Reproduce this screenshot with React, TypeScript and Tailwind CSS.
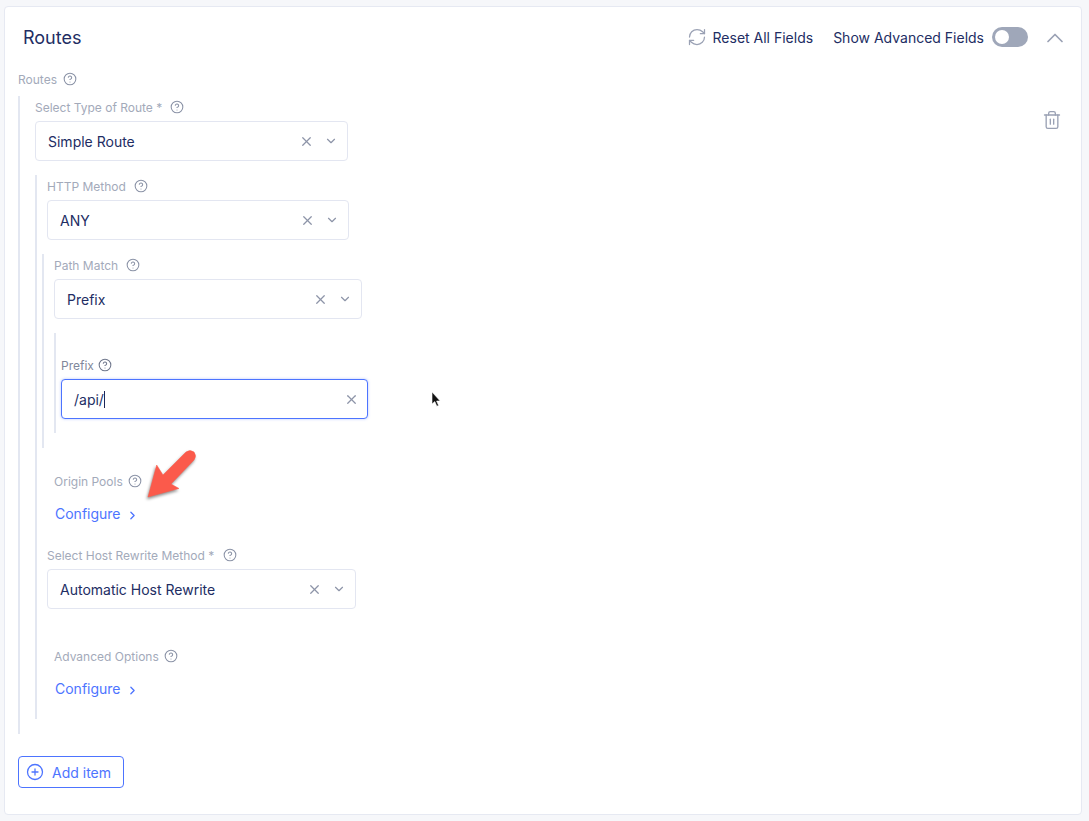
import { ChevronDown, ChevronRight, ChevronUp, CircleHelp, CirclePlus, RefreshCw, Trash2, X } from "lucide-react";

function Label({ text, gap = "ml-[5px]", dark = false }: { text: string; gap?: string; dark?: boolean }) {
  return (
    <div className={`flex items-center h-[14px] text-[12px] leading-[14px] ${dark ? "text-[#7f879b]" : "text-[#a3aaba]"}`}>
      <span>{text}</span>
      <CircleHelp size={14} strokeWidth={1.8} className={`${gap} -mt-[2px] ${dark ? "text-[#6f778c]" : "text-[#8a92a6]"}`} />
    </div>
  );
}

function Select({ value, width }: { value: string; width: string }) {
  return (
    <div className={`flex items-center h-10 ${width} mt-[6px] pl-3 pr-[9px] bg-white border border-[#e3e6f1] rounded-[4px] text-[14px] text-[#222d63]`}>
      <span className="flex-1">{value}</span>
      <X size={15} strokeWidth={2} className="text-[#8d94a8]" />
      <ChevronDown size={14} strokeWidth={2} className="ml-[10px] text-[#8d94a8]" />
    </div>
  );
}

function Configure() {
  return (
    <div className="flex items-center h-5 text-[14px] leading-5 text-[#4d74ff]">
      <span>Configure</span>
      <ChevronRight size={13} strokeWidth={2.4} className="ml-[5px] mt-[2px]" />
    </div>
  );
}

export default function App() {
  return (
    <div className="relative w-[1089px] h-[821px] overflow-hidden bg-[#f6f7fa] pt-[6px] pl-[4px] font-['Inter',sans-serif]">
      <div className="w-[1078px] h-[809px] bg-white border border-[#e6e9f2] rounded-[4px]">
        {/* Header */}
        <div className="flex items-center h-[20px] mt-[21px] ml-[18px] mr-[12px]">
          <h1 className="flex-1 text-[18px] leading-5 text-[#222d63]">Routes</h1>
          <RefreshCw size={20} strokeWidth={1.5} className="-mt-[2px] text-[#9aa1b4]" />
          <span className="ml-[6px] -mt-[2px] text-[14px] text-[#222d63]">Reset All Fields</span>
          <span className="ml-[20px] -mt-[2px] text-[14px] text-[#222d63]">Show Advanced Fields</span>
          <div className="flex items-center ml-[8px] -mt-[2px] w-9 h-5 rounded-full bg-[#9fa7b9] pl-[3px]">
            <div className="w-[14px] h-[14px] rounded-full bg-white" />
          </div>
          <ChevronUp size={28} strokeWidth={1.5} className="ml-[13px] text-[#9aa1b4]" />
        </div>

        <div className="relative ml-[13px] mt-[25px]">
          <Label text="Routes" gap="ml-[6px]" />
          <Trash2 size={20} strokeWidth={1.6} className="absolute right-[19px] top-[37px] text-[#9aa1b4]" />

          {/* Route item */}
          <div className="mt-[9px] h-[638px] w-[400px] border-l-2 border-[#e3e7f1] pt-[5px] pl-[15px]">
            <Label text="Select Type of Route *" gap="ml-2" />
            <Select value="Simple Route" width="w-[313px]" />

            {/* HTTP method */}
            <div className="mt-[14px] h-[544px] border-l-2 border-[#e3e7f1] pt-[5px] pl-[10px]">
              <Label text="HTTP Method" gap="ml-2" />
              <Select value="ANY" width="w-[302px]" />

              {/* Path match */}
              <div className="-ml-[5px] mt-[14px] h-[194px] border-l-2 border-[#e3e7f1] pt-[5px] pl-[10px]">
                <Label text="Path Match" gap="ml-2" />
                <Select value="Prefix" width="w-[308px]" />

                {/* Prefix */}
                <div className="mt-[14px] h-[100px] border-l-2 border-[#e3e7f1] pt-[26px] pl-[5px]">
                  <Label text="Prefix" gap="ml-1" dark />
                  <div className="flex items-center h-10 w-[307px] mt-[6px] pl-3 pr-2 bg-white border border-[#4d74ff] rounded-[4px] shadow-[0_0_3px_rgba(77,116,255,0.4)] text-[14px] text-[#222d63]">
                    <span>/api/</span>
                    <span className="w-px h-[17px] bg-[#1c2657]" />
                    <X size={15} strokeWidth={2} className="ml-auto text-[#8d94a8]" />
                  </div>
                </div>
              </div>

              <div className="ml-[7px] mt-[27px]">
                <Label text="Origin Pools" />
                <div className="mt-[15px] ml-px">
                  <Configure />
                </div>
              </div>

              <div className="mt-[25px]">
                <Label text="Select Host Rewrite Method *" gap="ml-[9px]" />
                <Select value="Automatic Host Rewrite" width="w-[309px]" />
              </div>

              <div className="ml-[7px] mt-[41px]">
                <Label text="Advanced Options" />
                <div className="mt-[15px] ml-px">
                  <Configure />
                </div>
              </div>
            </div>
          </div>

          <button className="flex items-center mt-[22px] w-[106px] h-8 pl-[7px] border border-[#4d74ff] rounded-[4px] text-[14px] text-[#4d74ff]">
            <CirclePlus size={18} strokeWidth={1.7} />
            <span className="ml-2">Add item</span>
          </button>
        </div>
      </div>

      {/* Annotation arrow */}
      <svg className="absolute left-[140px] top-[444px] drop-shadow-[-1px_2px_1.5px_rgba(0,0,0,0.45)]" width="62" height="58" viewBox="0 0 62 58">
        <path d="M8 53 L16.7 21 L23 31 L46 8 Q50 5 54 8 Q57 12 54 16 L31 40 L39 44.5 Z" fill="#fb5a4b" stroke="#fb5a4b" strokeWidth="0.5" strokeLinejoin="round" />
      </svg>

      {/* Mouse pointer */}
      <svg className="absolute left-[431px] top-[391px]" width="12" height="18" viewBox="0 0 12 18">
        <path d="M1 1 L1 13 L3.8 10.6 L5.8 15.2 L7.6 14.4 L5.6 10 L9.2 10 Z" fill="#111" stroke="#fff" strokeWidth="0.6" />
      </svg>
    </div>
  );
}
